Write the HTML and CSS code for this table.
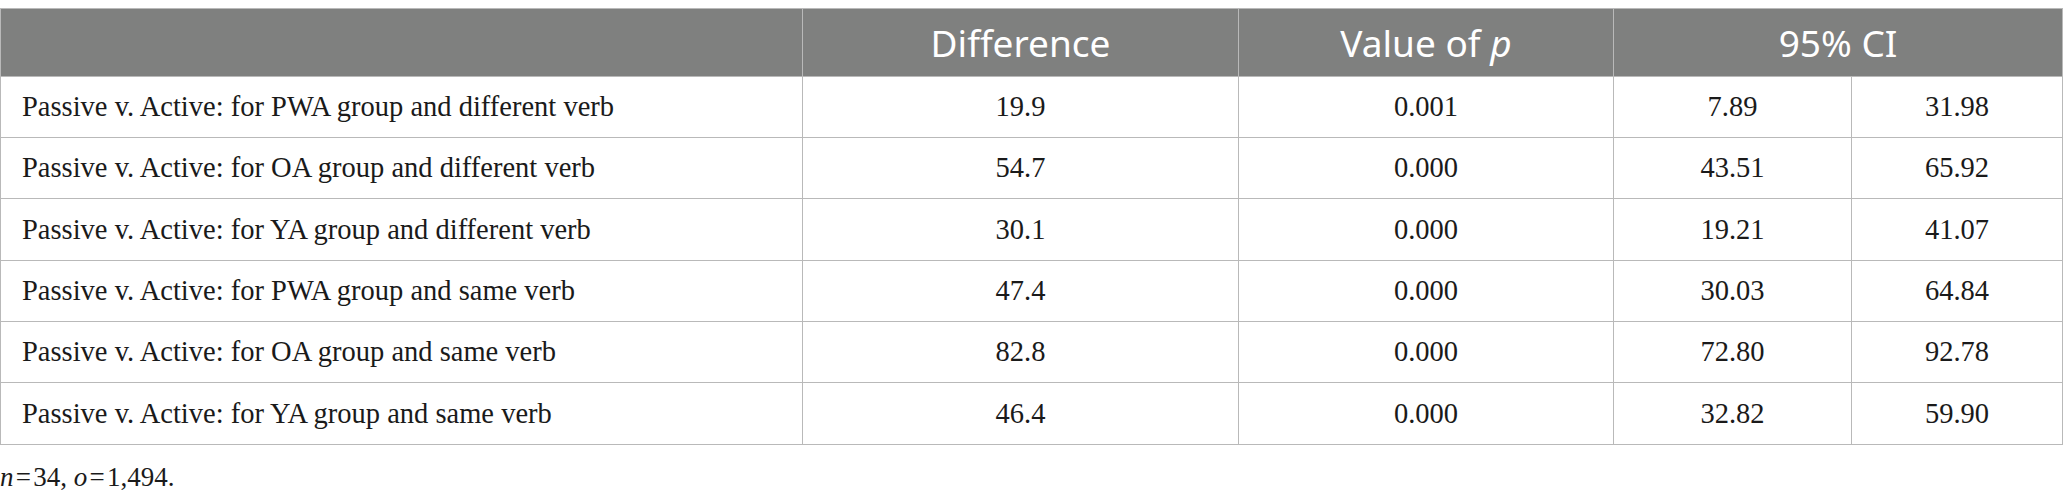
FILE: index.html
```html
<!DOCTYPE html>
<html>
<head>
<meta charset="utf-8">
<link rel="stylesheet" href="styles.css">
</head>
<body>
<div class="wrap">
<table class="stats">
<colgroup>
<col class="c-label">
<col class="c-diff">
<col class="c-p">
<col class="c-lo">
<col class="c-hi">
</colgroup>
<thead>
<tr class="head-row">
<th></th>
<th>Difference</th>
<th>Value of <i>p</i></th>
<th colspan="2">95% CI</th>
</tr>
</thead>
<tbody>
<tr class="r1"><td class="label">Passive v. Active: for PWA group and different verb</td><td>19.9</td><td>0.001</td><td>7.89</td><td>31.98</td></tr>
<tr class="r2"><td class="label">Passive v. Active: for OA group and different verb</td><td>54.7</td><td>0.000</td><td>43.51</td><td>65.92</td></tr>
<tr class="r3"><td class="label">Passive v. Active: for YA group and different verb</td><td>30.1</td><td>0.000</td><td>19.21</td><td>41.07</td></tr>
<tr class="r4"><td class="label">Passive v. Active: for PWA group and same verb</td><td>47.4</td><td>0.000</td><td>30.03</td><td>64.84</td></tr>
<tr class="r5"><td class="label">Passive v. Active: for OA group and same verb</td><td>82.8</td><td>0.000</td><td>72.80</td><td>92.78</td></tr>
<tr class="r6"><td class="label">Passive v. Active: for YA group and same verb</td><td>46.4</td><td>0.000</td><td>32.82</td><td>59.90</td></tr>
</tbody>
</table>
<p class="note"><i>n</i>&#8202;=&#8202;34, <i>o</i>&#8202;=&#8202;1,494.</p>
</div>
</body>
</html>
```
FILE: styles.css
```css
html, body {
  margin: 0;
  padding: 0;
  background: #ffffff;
}
.wrap {
  padding-top: 8px;
}
.stats {
  border-collapse: collapse;
  table-layout: fixed;
  width: 2062px;
  font-family: "Liberation Serif", "Times New Roman", serif;
  color: #1a1a1a;
}
.c-label { width: 802px; }
.c-diff { width: 436px; }
.c-p { width: 375px; }
.c-lo { width: 238px; }
.c-hi { width: 211px; }
.stats th,
.stats td {
  border: 1px solid #b9b9b9;
  padding: 0;
}
.head-row {
  height: 68px;
  background: #7f807f;
}
.stats th {
  font-family: "Noto Sans", "Open Sans", sans-serif;
  font-weight: 400;
  font-size: 37px;
  color: #ffffff;
  text-align: center;
  vertical-align: middle;
}
.stats tbody tr {
  height: 61px;
}
.stats tbody tr.r3,
.stats tbody tr.r6 {
  height: 62px;
}
.stats td {
  font-size: 28.5px;
  text-align: center;
  vertical-align: middle;
}
.stats td.label {
  text-align: left;
  padding-left: 21px;
}
.note {
  margin: 17px 0 0 0;
  font-family: "Liberation Serif", "Times New Roman", serif;
  font-size: 27px;
  color: #1a1a1a;
}
```
